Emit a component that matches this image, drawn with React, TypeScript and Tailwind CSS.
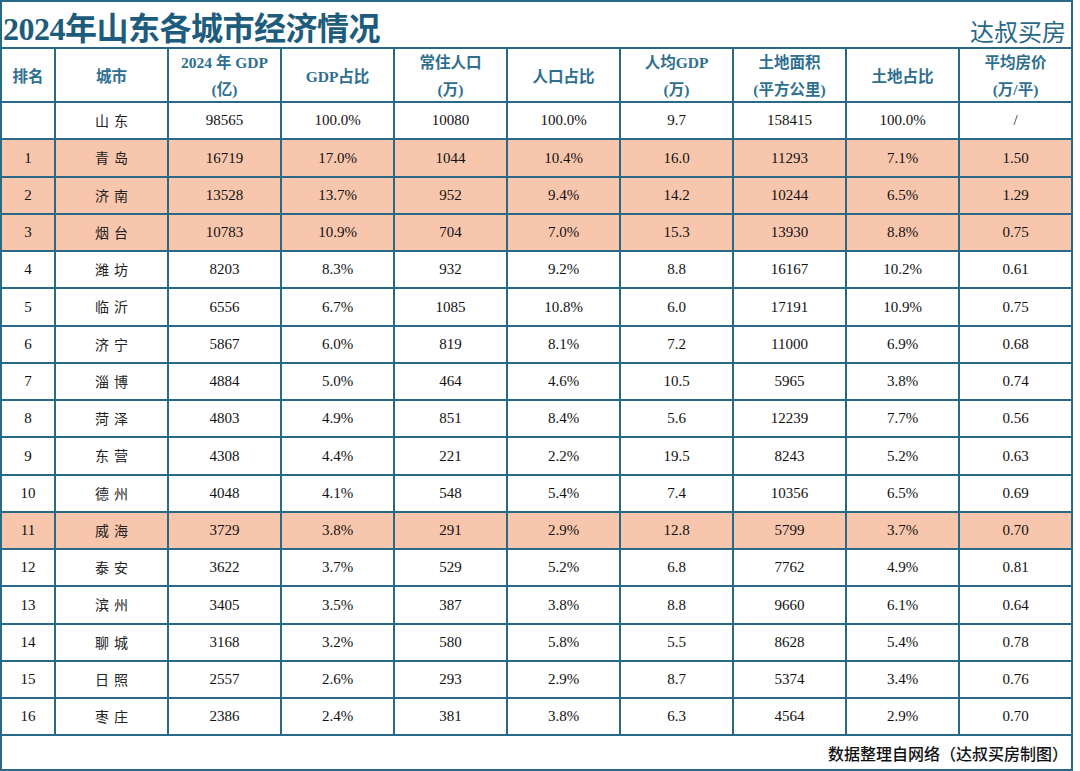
const rows = [
  ["", "山东", "98565", "100.0%", "10080", "100.0%", "9.7", "158415", "100.0%", "/"],
  ["1", "青岛", "16719", "17.0%", "1044", "10.4%", "16.0", "11293", "7.1%", "1.50"],
  ["2", "济南", "13528", "13.7%", "952", "9.4%", "14.2", "10244", "6.5%", "1.29"],
  ["3", "烟台", "10783", "10.9%", "704", "7.0%", "15.3", "13930", "8.8%", "0.75"],
  ["4", "潍坊", "8203", "8.3%", "932", "9.2%", "8.8", "16167", "10.2%", "0.61"],
  ["5", "临沂", "6556", "6.7%", "1085", "10.8%", "6.0", "17191", "10.9%", "0.75"],
  ["6", "济宁", "5867", "6.0%", "819", "8.1%", "7.2", "11000", "6.9%", "0.68"],
  ["7", "淄博", "4884", "5.0%", "464", "4.6%", "10.5", "5965", "3.8%", "0.74"],
  ["8", "菏泽", "4803", "4.9%", "851", "8.4%", "5.6", "12239", "7.7%", "0.56"],
  ["9", "东营", "4308", "4.4%", "221", "2.2%", "19.5", "8243", "5.2%", "0.63"],
  ["10", "德州", "4048", "4.1%", "548", "5.4%", "7.4", "10356", "6.5%", "0.69"],
  ["11", "威海", "3729", "3.8%", "291", "2.9%", "12.8", "5799", "3.7%", "0.70"],
  ["12", "泰安", "3622", "3.7%", "529", "5.2%", "6.8", "7762", "4.9%", "0.81"],
  ["13", "滨州", "3405", "3.5%", "387", "3.8%", "8.8", "9660", "6.1%", "0.64"],
  ["14", "聊城", "3168", "3.2%", "580", "5.8%", "5.5", "8628", "5.4%", "0.78"],
  ["15", "日照", "2557", "2.6%", "293", "2.9%", "8.7", "5374", "3.4%", "0.76"],
  ["16", "枣庄", "2386", "2.4%", "381", "3.8%", "6.3", "4564", "2.9%", "0.70"],
]

// rows with the peach fill
const HIGHLIGHT = ["1", "2", "3", "11"]

const headers: [string, string?][] = [
  ["排名"],
  ["城市"],
  ["2024 年 GDP", "(亿)"],
  ["GDP占比"],
  ["常住人口", "(万)"],
  ["人口占比"],
  ["人均GDP", "(万)"],
  ["土地面积", "(平方公里)"],
  ["土地占比"],
  ["平均房价", "(万/平)"],
]

const gridCols = "grid grid-cols-[54px_repeat(8,113px)_111px]"

export default function App() {
  return (
    <div className="w-[1080px] h-[771px] bg-white font-['Liberation_Serif','Noto_Sans_CJK_SC',serif]">
      <div className="w-[1073px] h-[771px] border-2 border-[#2a6887] flex flex-col">
        {/* Title */}
        <div className="h-[47px] border-b-2 border-[#2a6887] flex items-end justify-between">
          <h1 className="text-[32px] font-bold leading-none text-[#1d5c7c] pl-[1px] pb-[2px] tracking-[-0.5px]">
            2024年山东各城市经济情况
          </h1>
          <div className="text-[24px] leading-none text-[#2a6887] pr-[5px] pb-[4px] font-['Noto_Sans_CJK_SC',sans-serif]">
            达叔买房
          </div>
        </div>

        {/* Header */}
        <div className={`${gridCols} h-[54px] border-b-2 border-[#2a6887]`}>
          {headers.map(([a, b], i) => (
            <div
              key={i}
              className={`flex flex-col items-center justify-center text-[15.5px] font-bold text-[#2e6f8f] leading-[27px] ${i < 9 ? "border-r-2 border-[#2a6887]" : ""}`}
            >
              <span>{a}</span>
              {b && <span>{b}</span>}
            </div>
          ))}
        </div>

        {/* Data */}
        {rows.map((r, ri) => (
          <div
            key={ri}
            className={`${gridCols} h-[37.25px] border-b-2 border-[#2a6887] ${HIGHLIGHT.includes(r[0]) ? "bg-[#f8c6ad]" : ""}`}
          >
            {r.map((v, ci) => (
              <div
                key={ci}
                className={`flex items-center justify-center text-[15px] text-[#111] ${ci < 9 ? "border-r-2 border-[#2a6887]" : ""}`}
              >
                {ci === 1 ? (
                  <span className="text-[14px] tracking-[5px] pl-[5px] font-['Noto_Sans_CJK_SC',sans-serif] text-[#222]">{v}</span>
                ) : (
                  v
                )}
              </div>
            ))}
          </div>
        ))}

        {/* Footer */}
        <div className="flex-1 flex items-center justify-end pr-[3px]">
          <span className="text-[16px] text-[#111] font-medium font-['Noto_Sans_CJK_SC',sans-serif]">数据整理自网络（达叔买房制图）</span>
        </div>
      </div>
    </div>
  )
}
